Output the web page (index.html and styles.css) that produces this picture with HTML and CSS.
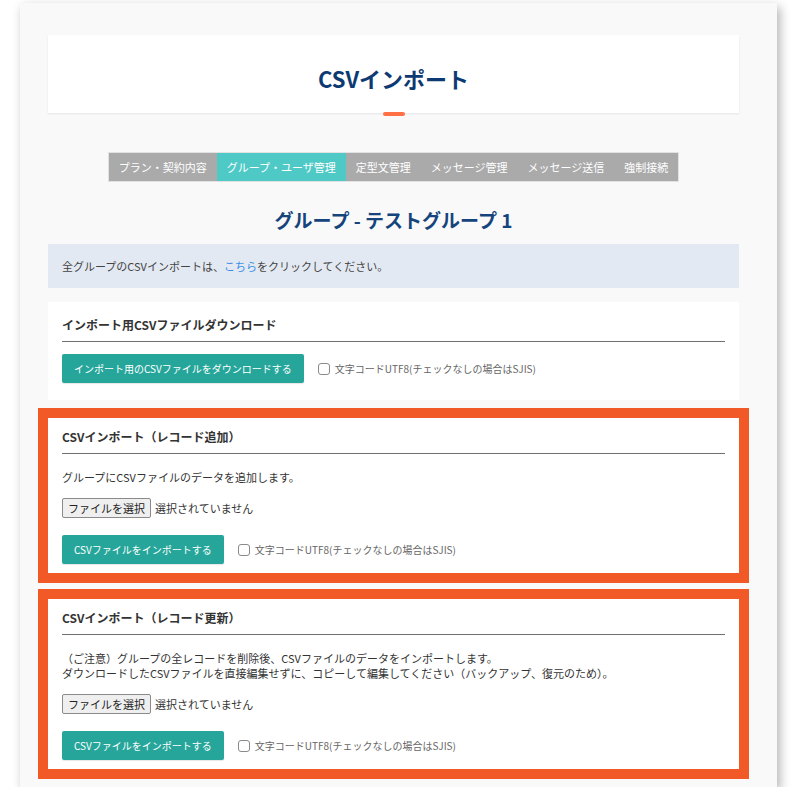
FILE: index.html
```html
<!DOCTYPE html>
<html lang="ja">
<head>
    <meta charset="UTF-8">
    <meta name="viewport" content="width=device-width, initial-scale=1.0">
    <title>CSVインポート</title>
    <link rel="stylesheet" href="styles.css">
</head>
<body>

<div class="frame">
    <div class="page-head">
        <h1>CSVインポート</h1>
    </div>

    <nav class="tabs">
        <ul>
            <li><a href="#">プラン・契約内容</a></li>
            <li class="active"><a href="#">グループ・ユーザ管理</a></li>
            <li><a href="#">定型文管理</a></li>
            <li><a href="#">メッセージ管理</a></li>
            <li><a href="#">メッセージ送信</a></li>
            <li><a href="#">強制接続</a></li>
        </ul>
    </nav>

    <h2 class="group-name">グループ - テストグループ 1</h2>

    <div class="notice">全グループのCSVインポートは、<a href="#">こちら</a>をクリックしてください。</div>

    <section class="card">
        <h3 class="card-title">インポート用CSVファイルダウンロード</h3>
        <div class="action-row">
            <button type="button" class="teal-btn">インポート用のCSVファイルをダウンロードする</button>
            <label class="check"><input type="checkbox"> 文字コードUTF8(チェックなしの場合はSJIS)</label>
        </div>
    </section>

    <!-- highlighted sections -->
    <section class="card highlight">
        <h3 class="card-title">CSVインポート（レコード追加）</h3>
        <p class="desc">グループにCSVファイルのデータを追加します。</p>
        <div class="file-row">
            <button type="button" class="file-btn">ファイルを選択</button>
            <span class="file-name">選択されていません</span>
        </div>
        <div class="action-row">
            <button type="button" class="teal-btn">CSVファイルをインポートする</button>
            <label class="check"><input type="checkbox"> 文字コードUTF8(チェックなしの場合はSJIS)</label>
        </div>
    </section>

    <section class="card highlight">
        <h3 class="card-title">CSVインポート（レコード更新）</h3>
        <p class="desc">（ご注意）グループの全レコードを削除後、CSVファイルのデータをインポートします。<br>ダウンロードしたCSVファイルを直接編集せずに、コピーして編集してください（バックアップ、復元のため）。</p>
        <div class="file-row">
            <button type="button" class="file-btn">ファイルを選択</button>
            <span class="file-name">選択されていません</span>
        </div>
        <div class="action-row">
            <button type="button" class="teal-btn">CSVファイルをインポートする</button>
            <label class="check"><input type="checkbox"> 文字コードUTF8(チェックなしの場合はSJIS)</label>
        </div>
    </section>
</div>

</body>
</html>
```

FILE: styles.css
```css
body {
    font-family: "Noto Sans CJK JP", "Noto Sans", sans-serif;
    background-color: #ffffff;
    color: #333;
    margin: 0;
}
.frame {
    width: 757px;
    box-sizing: border-box;
    margin: 3px 0 0 20px;
    padding: 32px 38px 10px 28px;
    background-color: #f9f9f9;
    box-shadow: 3px 4px 10px rgba(0, 0, 0, 0.3);
}
.page-head {
    position: relative;
    background-color: #fff;
    padding: 31px 0 23px;
    text-align: center;
    box-shadow: 0 1px 2px rgba(0, 0, 0, 0.08);
}
.page-head h1 {
    margin: 0;
    font-size: 22px;
    line-height: 24px;
    font-weight: 700;
    color: #0e3a73;
}
/* small orange mark under the heading */
.page-head::after {
    content: "";
    position: absolute;
    left: 50%;
    bottom: -3px;
    width: 22px;
    height: 4px;
    margin-left: -11px;
    border-radius: 2px;
    background-color: #ff7044;
}
.tabs {
    display: flex;
    justify-content: center;
    margin-top: 39px;
}
.tabs ul {
    display: flex;
    list-style: none;
    margin: 0;
    padding: 0;
    border: 1px solid #e2e2e2;
    background-color: #aaaaaa;
}
.tabs a {
    display: block;
    padding: 0 10px;
    line-height: 28px;
    font-size: 11px;
    color: #fff;
    text-decoration: none;
}
.tabs li.active a {
    background-color: #4fc9c6;
}
.group-name {
    margin: 26px 0 12px;
    text-align: center;
    font-size: 19px;
    line-height: 24px;
    font-weight: 700;
    color: #15447d;
}
.notice {
    padding: 14px;
    font-size: 11px;
    line-height: 16px;
    color: #444;
    background-color: #e3e9f2;
    margin-bottom: 14px;
}
.notice a {
    color: #3a8ee6;
    text-decoration: none;
}
.card {
    position: relative;
    background-color: #fff;
    padding: 14px 14px 17px;
    margin-bottom: 14px;
}
.card:last-child {
    margin-bottom: 0;
}
/* orange annotation box */
.card.highlight::after {
    content: "";
    position: absolute;
    top: -6px;
    bottom: -2px;
    left: -10px;
    right: -10px;
    border: 10px solid #f15a26;
    pointer-events: none;
}
.card-title {
    margin: 0 0 12px;
    padding-bottom: 7px;
    font-size: 12px;
    line-height: 18px;
    font-weight: 700;
    color: #333;
    border-bottom: 1px solid #707070;
}
.desc {
    margin: 16px 0 13px;
    font-size: 11px;
    line-height: 15px;
    color: #333;
}
.file-row {
    display: flex;
    align-items: center;
    height: 20px;
    margin-bottom: 17px;
}
.file-btn {
    height: 20px;
    padding: 0 5px;
    font-family: inherit;
    font-size: 11px;
    color: #222;
    background-color: #efefef;
    border: 1px solid #8a8a8a;
    border-radius: 2px;
}
.file-name {
    margin-left: 4px;
    font-size: 11px;
    color: #333;
}
.action-row {
    display: flex;
    align-items: center;
}
.teal-btn {
    height: 29px;
    padding: 0 12px;
    font-family: inherit;
    font-size: 10px;
    color: #fff;
    background-color: #26a69a;
    border: none;
    border-radius: 2px;
    box-shadow: 0 1px 1px rgba(0, 0, 0, 0.1);
}
.check {
    display: flex;
    align-items: center;
    margin-left: 14px;
    font-size: 10px;
    color: #666;
}
.check input {
    appearance: none;
    width: 12px;
    height: 12px;
    margin: 0 5px 0 0;
    border: 1px solid #8a8a8a;
    border-radius: 3px;
    background-color: #fff;
}
```
